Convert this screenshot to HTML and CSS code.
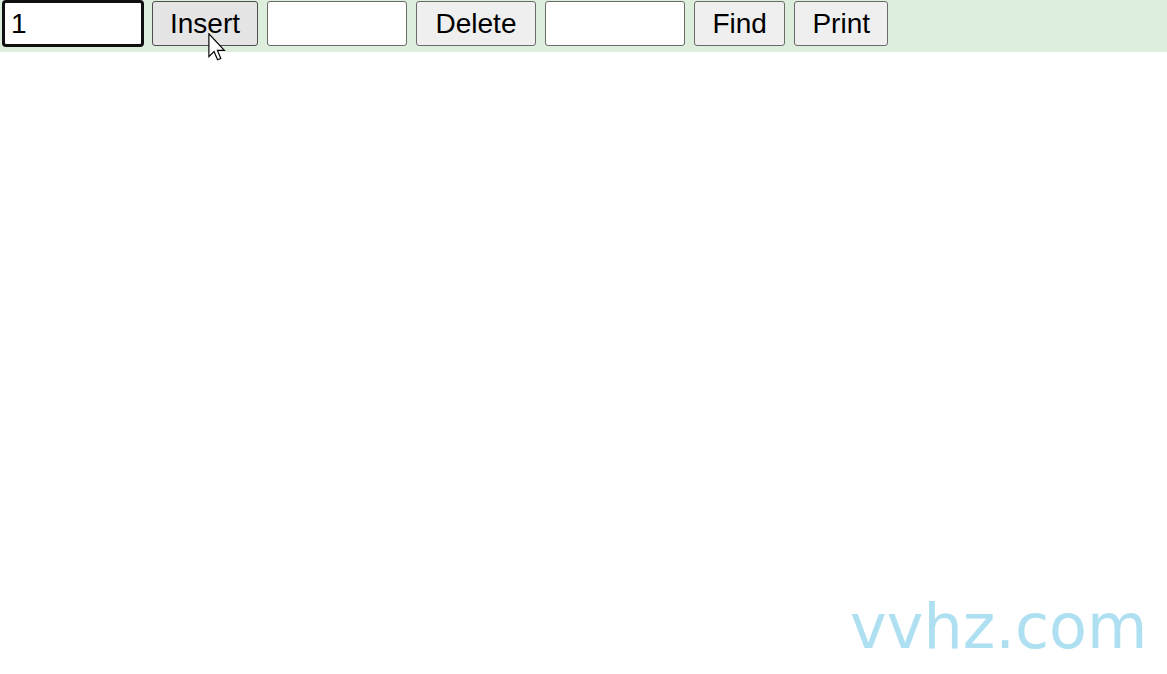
FILE: index.html
```html
<!DOCTYPE html>
<html>
<head>
<meta charset="utf-8">
<title>List</title>
<link rel="stylesheet" href="styles.css">
</head>
<body>
<div class="toolbar">
  <input class="field focused" type="text" value="1">
  <button class="btn hover">Insert</button>
  <input class="field" type="text">
  <button class="btn wide">Delete</button>
  <input class="field" type="text">
  <button class="btn mid">Find</button>
  <button class="btn">Print</button>
</div>
<svg class="cursor" width="18" height="28" viewBox="0 0 12 19">
  <path d="M0.5 0.5 L0.5 16 L4 12.6 L6.4 18.2 L8.6 17.3 L6.3 11.8 L11 11.8 Z" fill="#fff" stroke="#000" stroke-width="0.8" stroke-linejoin="miter"/>
</svg>
<div class="watermark">vvhz.com</div>
</body>
</html>
```

FILE: styles.css
```css
html, body {
  margin: 0;
  padding: 0;
  background: #ffffff;
  font-family: "Liberation Sans", Arial, sans-serif;
}
.toolbar {
  display: flex;
  align-items: flex-start;
  gap: 9px;
  height: 52px;
  box-sizing: border-box;
  padding: 1px 0 0 3px;
  background: #ddeedd;
}
.field {
  box-sizing: border-box;
  width: 140px;
  height: 45px;
  margin: 0;
  padding: 0 6px;
  border: 1px solid #6a6a6a;
  border-radius: 3px;
  background: #ffffff;
  font-family: "Liberation Sans", Arial, sans-serif;
  font-size: 28px;
  color: #000;
  outline: none;
}
.field.focused {
  border: 2px solid #101010;
  box-shadow: 0 0 0 1px #101010;
  padding-left: 6px;
}
.btn {
  box-sizing: border-box;
  height: 45px;
  margin: 0;
  padding: 0 17px;
  border: 1px solid #6a6a6a;
  border-radius: 3px;
  background: #efefef;
  font-family: "Liberation Sans", Arial, sans-serif;
  font-size: 28px;
  color: #000;
  line-height: 1;
}
.btn.wide {
  padding: 0 18.5px;
}
.btn.mid {
  padding: 0 17.5px;
}
.btn.hover {
  background: #e5e5e5;
  border-color: #4f4f4f;
}
.cursor {
  position: absolute;
  left: 208px;
  top: 33px;
}
.watermark {
  position: absolute;
  left: 850px;
  top: 590px;
  font-family: "DejaVu Sans", sans-serif;
  font-size: 62px;
  color: #aee0f2;
}
```
